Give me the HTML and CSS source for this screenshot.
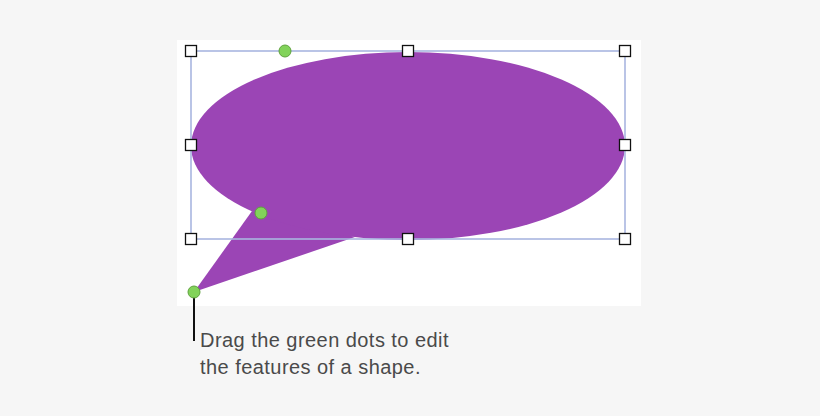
FILE: index.html
```html
<!DOCTYPE html>
<html>
<head>
<meta charset="utf-8">
<link rel="stylesheet" href="styles.css">
</head>
<body>
<div class="page">
  <div class="figure">
    <div class="panel">
      <svg class="canvas" width="464" height="266" viewBox="177 40 464 266">
        <path d="M252 211 L194 292 L355 237 Z" fill="#9b45b5"/>
        <ellipse cx="408" cy="146" rx="217" ry="94" fill="#9b45b5"/>
        <rect x="191" y="51" width="434" height="188" fill="none" stroke="#a9b6e0" stroke-width="1.6"/>
        <g fill="#fff" stroke="#111" stroke-width="1.3">
          <rect x="185.5" y="45.5" width="11" height="11"/>
          <rect x="402.5" y="45.5" width="11" height="11"/>
          <rect x="619.5" y="45.5" width="11" height="11"/>
          <rect x="185.5" y="139.5" width="11" height="11"/>
          <rect x="619.5" y="139.5" width="11" height="11"/>
          <rect x="185.5" y="233.5" width="11" height="11"/>
          <rect x="402.5" y="233.5" width="11" height="11"/>
          <rect x="619.5" y="233.5" width="11" height="11"/>
        </g>
        <line x1="194" y1="292" x2="194" y2="341" stroke="#111" stroke-width="2"/>
        <g fill="#82d35a" stroke="#5fa23e" stroke-width="1">
          <circle cx="285" cy="51" r="6"/>
          <circle cx="261" cy="213" r="6"/>
          <circle cx="194" cy="292" r="6"/>
        </g>
      </svg>
    </div>
    <p class="caption">Drag the green dots to edit<br>the features of a shape.</p>
  </div>
</div>
</body>
</html>
```
FILE: styles.css
```css
html, body {
  margin: 0;
  padding: 0;
  background: #f6f6f6;
}
.page {
  width: 820px;
  height: 416px;
  display: flex;
  flex-direction: column;
  align-items: flex-start;
  padding: 40px 0 0 177px;
  box-sizing: border-box;
}
.figure {
  display: flex;
  flex-direction: column;
}
.panel {
  width: 464px;
  height: 266px;
  background: #ffffff;
}
.canvas {
  display: block;
  overflow: visible;
}
.caption {
  margin: 21px 0 0 23px;
  font-family: "Liberation Sans", Arial, sans-serif;
  font-size: 20px;
  letter-spacing: 0.45px;
  line-height: 27px;
  color: #4a4a4a;
}
```
